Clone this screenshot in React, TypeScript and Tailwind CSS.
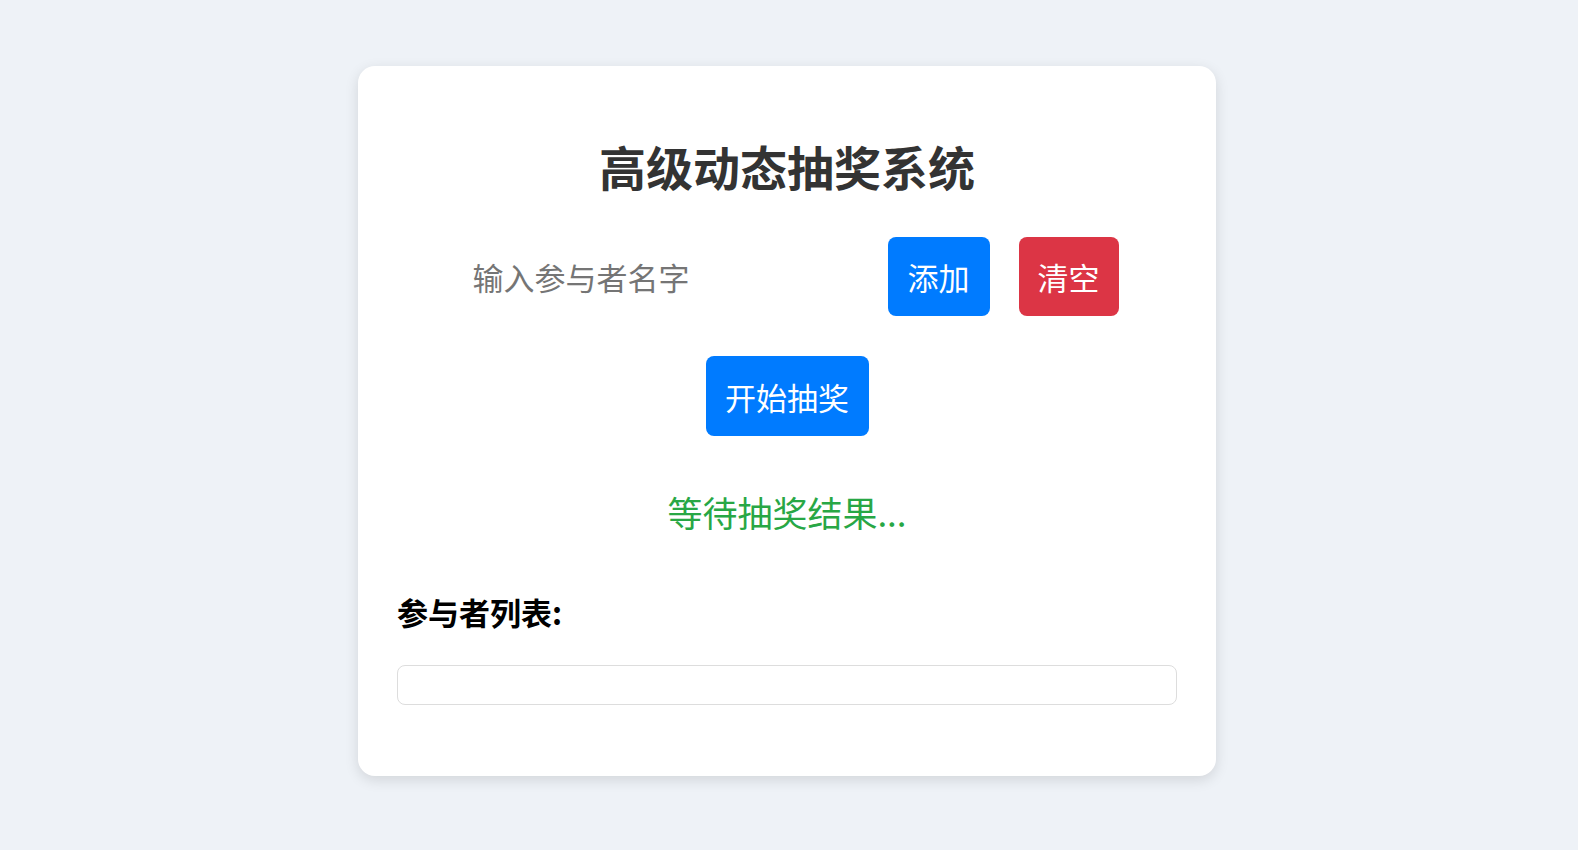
import { useState } from "react";

const font = {
  fontFamily: '"Noto Sans CJK SC", "Liberation Sans", sans-serif',
};

export default function App() {
  const [name, setName] = useState("");
  const [people, setPeople] = useState<string[]>([]);

  return (
    <div
      className="min-h-[850px] w-full bg-[#eef2f7] flex justify-center pt-[66px] pr-[4px]"
      style={font}
    >
      <div className="w-[858px] h-[710px] bg-white rounded-[17px] shadow-[0_4px_14px_rgba(0,0,0,0.12)] px-[39px] pt-[39px]">
        {/* Title */}
        <h1 className="mt-[28px] text-center text-[47px] leading-[66px] font-bold text-[#333333]">
          高级动态抽奖系统
        </h1>

        {/* Input row */}
        <div className="mt-[38px] flex items-center justify-center gap-[29px]">
          <input
            value={name}
            onChange={(e) => setName(e.target.value)}
            placeholder="输入参与者名字"
            className="w-[403px] h-[79px] pl-[17px] text-[31px] text-[#333] placeholder:text-[#757575] outline-none bg-transparent"
          />
          <button
            onClick={() => {
              if (name.trim()) setPeople([...people, name.trim()]);
              setName("");
            }}
            className="h-[79px] px-[20px] rounded-[8px] bg-[#007bff] text-white text-[31px] leading-none"
          >
            添加
          </button>
          <button
            onClick={() => setPeople([])}
            className="h-[79px] px-[19px] rounded-[8px] bg-[#dc3545] text-white text-[31px] leading-none"
          >
            清空
          </button>
        </div>

        {/* Start */}
        <div className="mt-[40px] flex justify-center">
          <button className="h-[80px] w-[163px] rounded-[8px] bg-[#007bff] text-white text-[31px] leading-none">
            开始抽奖
          </button>
        </div>

        {/* Result */}
        <div className="mt-[51px] text-center text-[35px] leading-[50px] text-[#28a745]">
          等待抽奖结果...
        </div>

        {/* List */}
        <h3 className="mt-[54px] text-[31px] leading-[42px] font-bold text-black">
          参与者列表:
        </h3>
        <div className="mt-[32px] min-h-[40px] border border-[#dddddd] rounded-[8px]">
          {people.map((p, i) => (
            <div key={i} className="px-3 py-1 text-[20px]">
              {p}
            </div>
          ))}
        </div>
      </div>
    </div>
  );
}
